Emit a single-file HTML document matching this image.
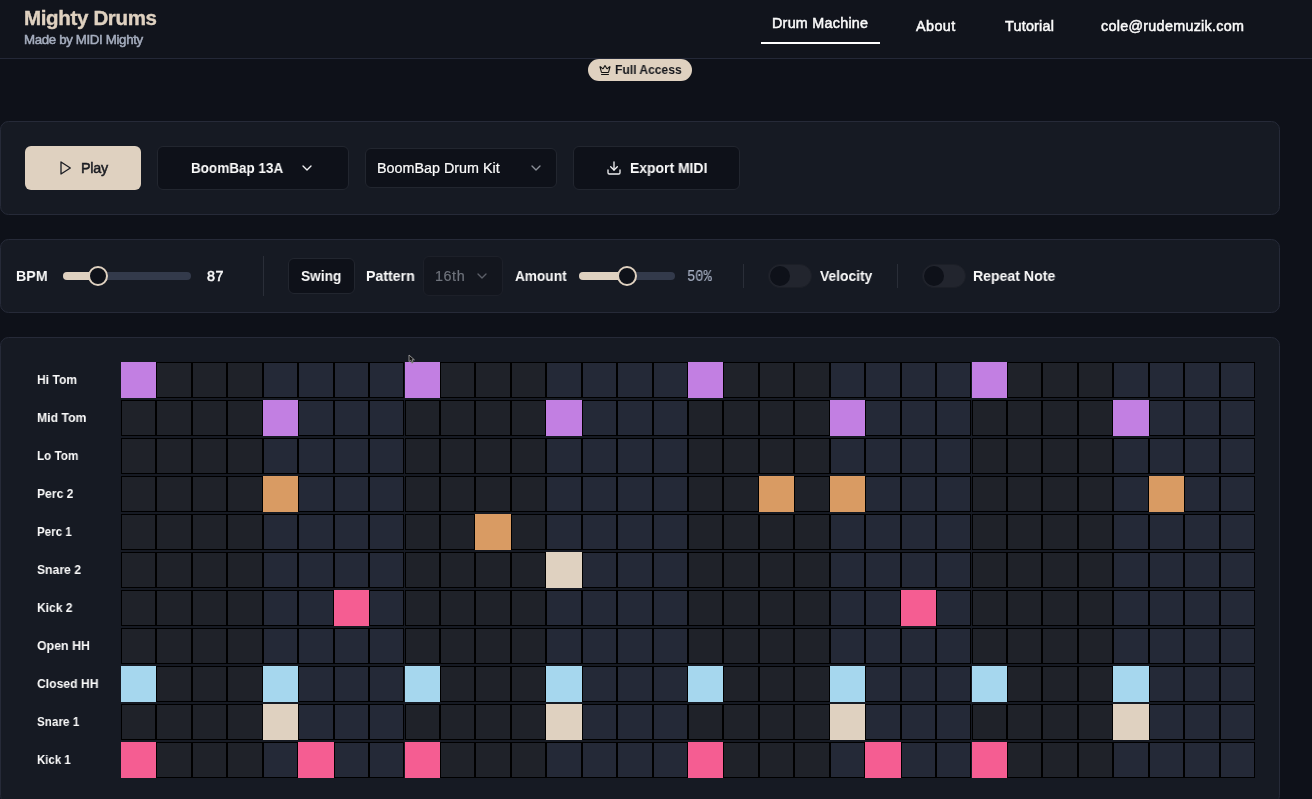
<!DOCTYPE html>
<html><head><meta charset="utf-8">
<style>
*{box-sizing:border-box;margin:0;padding:0}
html,body{width:1312px;height:799px;overflow:hidden;background:#0e1119;font-family:"Liberation Sans",sans-serif;color:#fafafa}
.abs{position:absolute}
#hdr{position:absolute;left:0;top:0;width:1312px;height:59px;background:#11141c;border-bottom:1px solid #242837}
.t{position:absolute;white-space:nowrap;line-height:1;will-change:transform}
.t.b{font-weight:700;-webkit-text-stroke:0.4px currentColor}
.t.sb{font-weight:700;transform-origin:0 0}
.t.m{font-weight:400;-webkit-text-stroke:0.5px currentColor}
.t.r{font-weight:400;-webkit-text-stroke:0.2px currentColor}
.t.mono{font-family:"Liberation Mono",monospace;-webkit-text-stroke:0.15px currentColor;transform:scaleX(0.86);transform-origin:0 0}
.mk{display:inline-block;width:0;height:0;vertical-align:baseline}
.card{position:absolute;left:0;width:1280px;background:#161a23;border:1px solid #262a38;border-radius:8.5px}
.box{position:absolute;background:#0e1119;border:1px solid #22262f;border-radius:6px}
.c{position:absolute;width:35.4375px;height:36px;border:1px solid #000}
.c.a{background:#1f2229}
.c.b{background:#242937}
.track{position:absolute;height:8px;border-radius:4px;background:#333a4b;overflow:hidden}
.fill{position:absolute;left:0;top:0;height:8px;background:#dfd1c0}
.thumb{position:absolute;width:20px;height:20px;border-radius:50%;background:#0e1119;border:2px solid #dfd1c0}
.div{position:absolute;width:1px;background:#2a2e38}
.tog{position:absolute;width:44px;height:24px;border-radius:12px;background:#22252e;border:1px solid #1c1f27}
.tog i{position:absolute;left:1px;top:1px;width:20px;height:20px;border-radius:50%;background:#0e1119}
</style></head><body>
<div id="hdr"></div>
<div id="title" class="t b" style="left:23.99px;top:8.01px;font-size:20.5px;color:#dfd1c0;letter-spacing:-0.336px;">Mighty Drums</div>
<div id="sub" class="t m" style="left:24.24px;top:33.01px;font-size:13.3px;color:#a6aebf;letter-spacing:-0.359px;">Made by MIDI Mighty</div>
<div id="nav1" class="t m" style="left:771.77px;top:16.00px;font-size:14.35px;color:#fafafa;letter-spacing:0.254px;">Drum Machine</div>
<div class="abs" style="left:761px;top:42px;width:119px;height:2px;background:#fff"></div>
<div id="nav2" class="t m" style="left:915.54px;top:19.00px;font-size:14.35px;color:#fafafa;letter-spacing:0.444px;">About</div>
<div id="nav3" class="t m" style="left:1005.25px;top:19.00px;font-size:14.35px;color:#fafafa;letter-spacing:0.233px;">Tutorial</div>
<div id="nav4" class="t m" style="left:1101.42px;top:19.00px;font-size:14.35px;color:#fafafa;letter-spacing:0.285px;">cole@rudemuzik.com</div>

<div class="abs" style="left:588px;top:59px;width:104px;height:22px;border-radius:11px;background:#dfd1c0"></div>
<svg class="abs" style="left:599px;top:64px" width="12" height="12" viewBox="0 0 24 24" fill="none" stroke="#111" stroke-width="2.1" stroke-linecap="round" stroke-linejoin="round"><path d="M11.562 3.266a.5.5 0 0 1 .876 0L15.39 8.87a1 1 0 0 0 1.516.294L21.183 5.5a.5.5 0 0 1 .798.519l-2.834 10.246a1 1 0 0 1-.956.734H5.81a1 1 0 0 1-.957-.734L2.02 6.02a.5.5 0 0 1 .798-.519l4.276 3.664a1 1 0 0 0 1.516-.294z"/><path d="M5 21h14"/></svg>
<div id="fa" class="t sb" style="left:615.30px;top:64.00px;font-size:12.3px;color:#15171c;transform:scaleX(0.9824);">Full Access</div>

<!-- card 1 -->
<div class="card" style="top:121px;height:94px"></div>
<div class="abs" style="left:25px;top:146px;width:116px;height:44px;border-radius:6px;background:#dfd1c0"></div>
<svg class="abs" style="left:56.5px;top:160px" width="16" height="16" viewBox="0 0 24 24" fill="none" stroke="#1b1d23" stroke-width="2" stroke-linecap="round" stroke-linejoin="round"><path d="M6 3l14 9-14 9V3z"/></svg>
<div id="play" class="t m" style="left:80.52px;top:161.00px;font-size:14.35px;color:#1b1d23;letter-spacing:-0.253px;">Play</div>

<div class="box" style="left:157px;top:146px;width:192px;height:44px"></div>
<div id="bb" class="t sb" style="left:191.41px;top:161.00px;font-size:14.35px;color:#fafafa;transform:scaleX(0.9398);">BoomBap 13A</div>
<svg class="abs" style="left:299px;top:160px" width="16" height="16" viewBox="0 0 24 24" fill="none" stroke="#f0f0f2" stroke-width="2" stroke-linecap="round" stroke-linejoin="round"><path d="M6 9l6 6 6-6"/></svg>

<div class="box" style="left:365px;top:148px;width:192px;height:40px"></div>
<div id="kit" class="t r" style="left:377.38px;top:161.00px;font-size:14.35px;color:#fafafa;letter-spacing:-0.009px;">BoomBap Drum Kit</div>
<svg class="abs" style="left:528px;top:160px" width="16" height="16" viewBox="0 0 24 24" fill="none" stroke="#8b8f98" stroke-width="2" stroke-linecap="round" stroke-linejoin="round"><path d="M6 9l6 6 6-6"/></svg>

<div class="box" style="left:573px;top:146px;width:167px;height:44px"></div>
<svg class="abs" style="left:606px;top:160px" width="16" height="16" viewBox="0 0 24 24" fill="none" stroke="#f0f0f2" stroke-width="2" stroke-linecap="round" stroke-linejoin="round"><path d="M21 15v4a2 2 0 0 1-2 2H5a2 2 0 0 1-2-2v-4"/><path d="M7 10l5 5 5-5"/><path d="M12 15V3"/></svg>
<div id="exp" class="t sb" style="left:629.61px;top:161.00px;font-size:14.35px;color:#fafafa;transform:scaleX(0.9712);">Export MIDI</div>

<!-- card 2 -->
<div class="card" style="top:239px;height:74px"></div>
<div id="bpm" class="t sb" style="left:15.54px;top:269.00px;font-size:14.35px;color:#fafafa;transform:scaleX(0.9913);">BPM</div>
<div class="track" style="left:63px;top:272px;width:128px"><div class="fill" style="width:35px"></div></div>
<div class="thumb" style="left:88px;top:266px"></div>
<div id="n87" class="t m" style="left:207.34px;top:269.00px;font-size:14.35px;color:#fafafa;letter-spacing:0.398px;">87</div>
<div class="div" style="left:263px;top:256px;height:40px"></div>

<div class="box" style="left:288px;top:258px;width:67px;height:36px"></div>
<div id="swing" class="t sb" style="left:301.00px;top:269.00px;font-size:14.35px;color:#fafafa;transform:scaleX(0.9534);">Swing</div>
<div id="pat" class="t sb" style="left:366.24px;top:269.00px;font-size:14.35px;color:#fafafa;transform:scaleX(0.9863);">Pattern</div>
<div class="box" style="left:423px;top:256px;width:80px;height:40px;background:#13161e;border-color:#1d2029"></div>
<div id="p16" class="t r" style="left:435.15px;top:269.00px;font-size:14.35px;color:#6f737c;letter-spacing:0.565px;">16th</div>
<svg class="abs" style="left:474px;top:268px" width="16" height="16" viewBox="0 0 24 24" fill="none" stroke="#5b5f68" stroke-width="2" stroke-linecap="round" stroke-linejoin="round"><path d="M6 9l6 6 6-6"/></svg>

<div id="amt" class="t sb" style="left:515.44px;top:269.00px;font-size:14.35px;color:#fafafa;transform:scaleX(0.9516);">Amount</div>
<div class="track" style="left:579px;top:272px;width:96px"><div class="fill" style="width:48px"></div></div>
<div class="thumb" style="left:617px;top:266px"></div>
<div id="pct" class="t mono" style="left:687.14px;top:269.01px;font-size:16px;color:#a3acbf;">50%</div>
<div class="div" style="left:743px;top:264px;height:24px"></div>

<div class="tog" style="left:768px;top:264px"><i></i></div>
<div id="vel" class="t sb" style="left:820.18px;top:269.00px;font-size:14.35px;color:#fafafa;transform:scaleX(0.9642);">Velocity</div>
<div class="div" style="left:897px;top:264px;height:24px"></div>
<div class="tog" style="left:922px;top:264px"><i></i></div>
<div id="rep" class="t sb" style="left:973.24px;top:269.00px;font-size:14.35px;color:#fafafa;transform:scaleX(0.9823);">Repeat Note</div>

<!-- card 3 -->
<div class="card" style="top:337px;height:467px"></div>
<div id="lbl0" class="t sb" style="left:36.83px;top:373.00px;font-size:13.3px;color:#fafafa;transform:scaleX(0.9089);">Hi Tom</div><div id="lbl1" class="t sb" style="left:36.83px;top:411.00px;font-size:13.3px;color:#fafafa;transform:scaleX(0.9221);">Mid Tom</div><div id="lbl2" class="t sb" style="left:36.93px;top:449.00px;font-size:13.3px;color:#fafafa;transform:scaleX(0.8792);">Lo Tom</div><div id="lbl3" class="t sb" style="left:36.83px;top:487.00px;font-size:13.3px;color:#fafafa;transform:scaleX(0.9124);">Perc 2</div><div id="lbl4" class="t sb" style="left:36.93px;top:525.01px;font-size:13.3px;color:#fafafa;transform:scaleX(0.8710);">Perc 1</div><div id="lbl5" class="t sb" style="left:37.43px;top:563.01px;font-size:13.3px;color:#fafafa;transform:scaleX(0.9157);">Snare 2</div><div id="lbl6" class="t sb" style="left:36.83px;top:601.01px;font-size:13.3px;color:#fafafa;transform:scaleX(0.9061);">Kick 2</div><div id="lbl7" class="t sb" style="left:37.17px;top:639.01px;font-size:13.3px;color:#fafafa;transform:scaleX(0.9309);">Open HH</div><div id="lbl8" class="t sb" style="left:36.55px;top:677.01px;font-size:13.3px;color:#fafafa;transform:scaleX(0.9143);">Closed HH</div><div id="lbl9" class="t sb" style="left:37.03px;top:715.01px;font-size:13.3px;color:#fafafa;transform:scaleX(0.8787);">Snare 1</div><div id="lbl10" class="t sb" style="left:36.93px;top:753.01px;font-size:13.3px;color:#fafafa;transform:scaleX(0.8608);">Kick 1</div>
<div class="c" style="left:121.00px;top:362px;background:#c27fe2;border-color:#c27fe2"></div><div class="c a" style="left:156.44px;top:362px"></div><div class="c a" style="left:191.88px;top:362px"></div><div class="c a" style="left:227.31px;top:362px"></div><div class="c b" style="left:262.75px;top:362px"></div><div class="c b" style="left:298.19px;top:362px"></div><div class="c b" style="left:333.62px;top:362px"></div><div class="c b" style="left:369.06px;top:362px"></div><div class="c" style="left:404.50px;top:362px;background:#c27fe2;border-color:#c27fe2"></div><div class="c a" style="left:439.94px;top:362px"></div><div class="c a" style="left:475.38px;top:362px"></div><div class="c a" style="left:510.81px;top:362px"></div><div class="c b" style="left:546.25px;top:362px"></div><div class="c b" style="left:581.69px;top:362px"></div><div class="c b" style="left:617.12px;top:362px"></div><div class="c b" style="left:652.56px;top:362px"></div><div class="c" style="left:688.00px;top:362px;background:#c27fe2;border-color:#c27fe2"></div><div class="c a" style="left:723.44px;top:362px"></div><div class="c a" style="left:758.88px;top:362px"></div><div class="c a" style="left:794.31px;top:362px"></div><div class="c b" style="left:829.75px;top:362px"></div><div class="c b" style="left:865.19px;top:362px"></div><div class="c b" style="left:900.62px;top:362px"></div><div class="c b" style="left:936.06px;top:362px"></div><div class="c" style="left:971.50px;top:362px;background:#c27fe2;border-color:#c27fe2"></div><div class="c a" style="left:1006.94px;top:362px"></div><div class="c a" style="left:1042.38px;top:362px"></div><div class="c a" style="left:1077.81px;top:362px"></div><div class="c b" style="left:1113.25px;top:362px"></div><div class="c b" style="left:1148.69px;top:362px"></div><div class="c b" style="left:1184.12px;top:362px"></div><div class="c b" style="left:1219.56px;top:362px"></div><div class="c a" style="left:121.00px;top:400px"></div><div class="c a" style="left:156.44px;top:400px"></div><div class="c a" style="left:191.88px;top:400px"></div><div class="c a" style="left:227.31px;top:400px"></div><div class="c" style="left:262.75px;top:400px;background:#c27fe2;border-color:#c27fe2"></div><div class="c b" style="left:298.19px;top:400px"></div><div class="c b" style="left:333.62px;top:400px"></div><div class="c b" style="left:369.06px;top:400px"></div><div class="c a" style="left:404.50px;top:400px"></div><div class="c a" style="left:439.94px;top:400px"></div><div class="c a" style="left:475.38px;top:400px"></div><div class="c a" style="left:510.81px;top:400px"></div><div class="c" style="left:546.25px;top:400px;background:#c27fe2;border-color:#c27fe2"></div><div class="c b" style="left:581.69px;top:400px"></div><div class="c b" style="left:617.12px;top:400px"></div><div class="c b" style="left:652.56px;top:400px"></div><div class="c a" style="left:688.00px;top:400px"></div><div class="c a" style="left:723.44px;top:400px"></div><div class="c a" style="left:758.88px;top:400px"></div><div class="c a" style="left:794.31px;top:400px"></div><div class="c" style="left:829.75px;top:400px;background:#c27fe2;border-color:#c27fe2"></div><div class="c b" style="left:865.19px;top:400px"></div><div class="c b" style="left:900.62px;top:400px"></div><div class="c b" style="left:936.06px;top:400px"></div><div class="c a" style="left:971.50px;top:400px"></div><div class="c a" style="left:1006.94px;top:400px"></div><div class="c a" style="left:1042.38px;top:400px"></div><div class="c a" style="left:1077.81px;top:400px"></div><div class="c" style="left:1113.25px;top:400px;background:#c27fe2;border-color:#c27fe2"></div><div class="c b" style="left:1148.69px;top:400px"></div><div class="c b" style="left:1184.12px;top:400px"></div><div class="c b" style="left:1219.56px;top:400px"></div><div class="c a" style="left:121.00px;top:438px"></div><div class="c a" style="left:156.44px;top:438px"></div><div class="c a" style="left:191.88px;top:438px"></div><div class="c a" style="left:227.31px;top:438px"></div><div class="c b" style="left:262.75px;top:438px"></div><div class="c b" style="left:298.19px;top:438px"></div><div class="c b" style="left:333.62px;top:438px"></div><div class="c b" style="left:369.06px;top:438px"></div><div class="c a" style="left:404.50px;top:438px"></div><div class="c a" style="left:439.94px;top:438px"></div><div class="c a" style="left:475.38px;top:438px"></div><div class="c a" style="left:510.81px;top:438px"></div><div class="c b" style="left:546.25px;top:438px"></div><div class="c b" style="left:581.69px;top:438px"></div><div class="c b" style="left:617.12px;top:438px"></div><div class="c b" style="left:652.56px;top:438px"></div><div class="c a" style="left:688.00px;top:438px"></div><div class="c a" style="left:723.44px;top:438px"></div><div class="c a" style="left:758.88px;top:438px"></div><div class="c a" style="left:794.31px;top:438px"></div><div class="c b" style="left:829.75px;top:438px"></div><div class="c b" style="left:865.19px;top:438px"></div><div class="c b" style="left:900.62px;top:438px"></div><div class="c b" style="left:936.06px;top:438px"></div><div class="c a" style="left:971.50px;top:438px"></div><div class="c a" style="left:1006.94px;top:438px"></div><div class="c a" style="left:1042.38px;top:438px"></div><div class="c a" style="left:1077.81px;top:438px"></div><div class="c b" style="left:1113.25px;top:438px"></div><div class="c b" style="left:1148.69px;top:438px"></div><div class="c b" style="left:1184.12px;top:438px"></div><div class="c b" style="left:1219.56px;top:438px"></div><div class="c a" style="left:121.00px;top:476px"></div><div class="c a" style="left:156.44px;top:476px"></div><div class="c a" style="left:191.88px;top:476px"></div><div class="c a" style="left:227.31px;top:476px"></div><div class="c" style="left:262.75px;top:476px;background:#d99b63;border-color:#d99b63"></div><div class="c b" style="left:298.19px;top:476px"></div><div class="c b" style="left:333.62px;top:476px"></div><div class="c b" style="left:369.06px;top:476px"></div><div class="c a" style="left:404.50px;top:476px"></div><div class="c a" style="left:439.94px;top:476px"></div><div class="c a" style="left:475.38px;top:476px"></div><div class="c a" style="left:510.81px;top:476px"></div><div class="c b" style="left:546.25px;top:476px"></div><div class="c b" style="left:581.69px;top:476px"></div><div class="c b" style="left:617.12px;top:476px"></div><div class="c b" style="left:652.56px;top:476px"></div><div class="c a" style="left:688.00px;top:476px"></div><div class="c a" style="left:723.44px;top:476px"></div><div class="c" style="left:758.88px;top:476px;background:#d99b63;border-color:#d99b63"></div><div class="c a" style="left:794.31px;top:476px"></div><div class="c" style="left:829.75px;top:476px;background:#d99b63;border-color:#d99b63"></div><div class="c b" style="left:865.19px;top:476px"></div><div class="c b" style="left:900.62px;top:476px"></div><div class="c b" style="left:936.06px;top:476px"></div><div class="c a" style="left:971.50px;top:476px"></div><div class="c a" style="left:1006.94px;top:476px"></div><div class="c a" style="left:1042.38px;top:476px"></div><div class="c a" style="left:1077.81px;top:476px"></div><div class="c b" style="left:1113.25px;top:476px"></div><div class="c" style="left:1148.69px;top:476px;background:#d99b63;border-color:#d99b63"></div><div class="c b" style="left:1184.12px;top:476px"></div><div class="c b" style="left:1219.56px;top:476px"></div><div class="c a" style="left:121.00px;top:514px"></div><div class="c a" style="left:156.44px;top:514px"></div><div class="c a" style="left:191.88px;top:514px"></div><div class="c a" style="left:227.31px;top:514px"></div><div class="c b" style="left:262.75px;top:514px"></div><div class="c b" style="left:298.19px;top:514px"></div><div class="c b" style="left:333.62px;top:514px"></div><div class="c b" style="left:369.06px;top:514px"></div><div class="c a" style="left:404.50px;top:514px"></div><div class="c a" style="left:439.94px;top:514px"></div><div class="c" style="left:475.38px;top:514px;background:#d99b63;border-color:#d99b63"></div><div class="c a" style="left:510.81px;top:514px"></div><div class="c b" style="left:546.25px;top:514px"></div><div class="c b" style="left:581.69px;top:514px"></div><div class="c b" style="left:617.12px;top:514px"></div><div class="c b" style="left:652.56px;top:514px"></div><div class="c a" style="left:688.00px;top:514px"></div><div class="c a" style="left:723.44px;top:514px"></div><div class="c a" style="left:758.88px;top:514px"></div><div class="c a" style="left:794.31px;top:514px"></div><div class="c b" style="left:829.75px;top:514px"></div><div class="c b" style="left:865.19px;top:514px"></div><div class="c b" style="left:900.62px;top:514px"></div><div class="c b" style="left:936.06px;top:514px"></div><div class="c a" style="left:971.50px;top:514px"></div><div class="c a" style="left:1006.94px;top:514px"></div><div class="c a" style="left:1042.38px;top:514px"></div><div class="c a" style="left:1077.81px;top:514px"></div><div class="c b" style="left:1113.25px;top:514px"></div><div class="c b" style="left:1148.69px;top:514px"></div><div class="c b" style="left:1184.12px;top:514px"></div><div class="c b" style="left:1219.56px;top:514px"></div><div class="c a" style="left:121.00px;top:552px"></div><div class="c a" style="left:156.44px;top:552px"></div><div class="c a" style="left:191.88px;top:552px"></div><div class="c a" style="left:227.31px;top:552px"></div><div class="c b" style="left:262.75px;top:552px"></div><div class="c b" style="left:298.19px;top:552px"></div><div class="c b" style="left:333.62px;top:552px"></div><div class="c b" style="left:369.06px;top:552px"></div><div class="c a" style="left:404.50px;top:552px"></div><div class="c a" style="left:439.94px;top:552px"></div><div class="c a" style="left:475.38px;top:552px"></div><div class="c a" style="left:510.81px;top:552px"></div><div class="c" style="left:546.25px;top:552px;background:#dfd1c0;border-color:#dfd1c0"></div><div class="c b" style="left:581.69px;top:552px"></div><div class="c b" style="left:617.12px;top:552px"></div><div class="c b" style="left:652.56px;top:552px"></div><div class="c a" style="left:688.00px;top:552px"></div><div class="c a" style="left:723.44px;top:552px"></div><div class="c a" style="left:758.88px;top:552px"></div><div class="c a" style="left:794.31px;top:552px"></div><div class="c b" style="left:829.75px;top:552px"></div><div class="c b" style="left:865.19px;top:552px"></div><div class="c b" style="left:900.62px;top:552px"></div><div class="c b" style="left:936.06px;top:552px"></div><div class="c a" style="left:971.50px;top:552px"></div><div class="c a" style="left:1006.94px;top:552px"></div><div class="c a" style="left:1042.38px;top:552px"></div><div class="c a" style="left:1077.81px;top:552px"></div><div class="c b" style="left:1113.25px;top:552px"></div><div class="c b" style="left:1148.69px;top:552px"></div><div class="c b" style="left:1184.12px;top:552px"></div><div class="c b" style="left:1219.56px;top:552px"></div><div class="c a" style="left:121.00px;top:590px"></div><div class="c a" style="left:156.44px;top:590px"></div><div class="c a" style="left:191.88px;top:590px"></div><div class="c a" style="left:227.31px;top:590px"></div><div class="c b" style="left:262.75px;top:590px"></div><div class="c b" style="left:298.19px;top:590px"></div><div class="c" style="left:333.62px;top:590px;background:#f55d92;border-color:#f55d92"></div><div class="c b" style="left:369.06px;top:590px"></div><div class="c a" style="left:404.50px;top:590px"></div><div class="c a" style="left:439.94px;top:590px"></div><div class="c a" style="left:475.38px;top:590px"></div><div class="c a" style="left:510.81px;top:590px"></div><div class="c b" style="left:546.25px;top:590px"></div><div class="c b" style="left:581.69px;top:590px"></div><div class="c b" style="left:617.12px;top:590px"></div><div class="c b" style="left:652.56px;top:590px"></div><div class="c a" style="left:688.00px;top:590px"></div><div class="c a" style="left:723.44px;top:590px"></div><div class="c a" style="left:758.88px;top:590px"></div><div class="c a" style="left:794.31px;top:590px"></div><div class="c b" style="left:829.75px;top:590px"></div><div class="c b" style="left:865.19px;top:590px"></div><div class="c" style="left:900.62px;top:590px;background:#f55d92;border-color:#f55d92"></div><div class="c b" style="left:936.06px;top:590px"></div><div class="c a" style="left:971.50px;top:590px"></div><div class="c a" style="left:1006.94px;top:590px"></div><div class="c a" style="left:1042.38px;top:590px"></div><div class="c a" style="left:1077.81px;top:590px"></div><div class="c b" style="left:1113.25px;top:590px"></div><div class="c b" style="left:1148.69px;top:590px"></div><div class="c b" style="left:1184.12px;top:590px"></div><div class="c b" style="left:1219.56px;top:590px"></div><div class="c a" style="left:121.00px;top:628px"></div><div class="c a" style="left:156.44px;top:628px"></div><div class="c a" style="left:191.88px;top:628px"></div><div class="c a" style="left:227.31px;top:628px"></div><div class="c b" style="left:262.75px;top:628px"></div><div class="c b" style="left:298.19px;top:628px"></div><div class="c b" style="left:333.62px;top:628px"></div><div class="c b" style="left:369.06px;top:628px"></div><div class="c a" style="left:404.50px;top:628px"></div><div class="c a" style="left:439.94px;top:628px"></div><div class="c a" style="left:475.38px;top:628px"></div><div class="c a" style="left:510.81px;top:628px"></div><div class="c b" style="left:546.25px;top:628px"></div><div class="c b" style="left:581.69px;top:628px"></div><div class="c b" style="left:617.12px;top:628px"></div><div class="c b" style="left:652.56px;top:628px"></div><div class="c a" style="left:688.00px;top:628px"></div><div class="c a" style="left:723.44px;top:628px"></div><div class="c a" style="left:758.88px;top:628px"></div><div class="c a" style="left:794.31px;top:628px"></div><div class="c b" style="left:829.75px;top:628px"></div><div class="c b" style="left:865.19px;top:628px"></div><div class="c b" style="left:900.62px;top:628px"></div><div class="c b" style="left:936.06px;top:628px"></div><div class="c a" style="left:971.50px;top:628px"></div><div class="c a" style="left:1006.94px;top:628px"></div><div class="c a" style="left:1042.38px;top:628px"></div><div class="c a" style="left:1077.81px;top:628px"></div><div class="c b" style="left:1113.25px;top:628px"></div><div class="c b" style="left:1148.69px;top:628px"></div><div class="c b" style="left:1184.12px;top:628px"></div><div class="c b" style="left:1219.56px;top:628px"></div><div class="c" style="left:121.00px;top:666px;background:#a6d7ee;border-color:#a6d7ee"></div><div class="c a" style="left:156.44px;top:666px"></div><div class="c a" style="left:191.88px;top:666px"></div><div class="c a" style="left:227.31px;top:666px"></div><div class="c" style="left:262.75px;top:666px;background:#a6d7ee;border-color:#a6d7ee"></div><div class="c b" style="left:298.19px;top:666px"></div><div class="c b" style="left:333.62px;top:666px"></div><div class="c b" style="left:369.06px;top:666px"></div><div class="c" style="left:404.50px;top:666px;background:#a6d7ee;border-color:#a6d7ee"></div><div class="c a" style="left:439.94px;top:666px"></div><div class="c a" style="left:475.38px;top:666px"></div><div class="c a" style="left:510.81px;top:666px"></div><div class="c" style="left:546.25px;top:666px;background:#a6d7ee;border-color:#a6d7ee"></div><div class="c b" style="left:581.69px;top:666px"></div><div class="c b" style="left:617.12px;top:666px"></div><div class="c b" style="left:652.56px;top:666px"></div><div class="c" style="left:688.00px;top:666px;background:#a6d7ee;border-color:#a6d7ee"></div><div class="c a" style="left:723.44px;top:666px"></div><div class="c a" style="left:758.88px;top:666px"></div><div class="c a" style="left:794.31px;top:666px"></div><div class="c" style="left:829.75px;top:666px;background:#a6d7ee;border-color:#a6d7ee"></div><div class="c b" style="left:865.19px;top:666px"></div><div class="c b" style="left:900.62px;top:666px"></div><div class="c b" style="left:936.06px;top:666px"></div><div class="c" style="left:971.50px;top:666px;background:#a6d7ee;border-color:#a6d7ee"></div><div class="c a" style="left:1006.94px;top:666px"></div><div class="c a" style="left:1042.38px;top:666px"></div><div class="c a" style="left:1077.81px;top:666px"></div><div class="c" style="left:1113.25px;top:666px;background:#a6d7ee;border-color:#a6d7ee"></div><div class="c b" style="left:1148.69px;top:666px"></div><div class="c b" style="left:1184.12px;top:666px"></div><div class="c b" style="left:1219.56px;top:666px"></div><div class="c a" style="left:121.00px;top:704px"></div><div class="c a" style="left:156.44px;top:704px"></div><div class="c a" style="left:191.88px;top:704px"></div><div class="c a" style="left:227.31px;top:704px"></div><div class="c" style="left:262.75px;top:704px;background:#dfd1c0;border-color:#dfd1c0"></div><div class="c b" style="left:298.19px;top:704px"></div><div class="c b" style="left:333.62px;top:704px"></div><div class="c b" style="left:369.06px;top:704px"></div><div class="c a" style="left:404.50px;top:704px"></div><div class="c a" style="left:439.94px;top:704px"></div><div class="c a" style="left:475.38px;top:704px"></div><div class="c a" style="left:510.81px;top:704px"></div><div class="c" style="left:546.25px;top:704px;background:#dfd1c0;border-color:#dfd1c0"></div><div class="c b" style="left:581.69px;top:704px"></div><div class="c b" style="left:617.12px;top:704px"></div><div class="c b" style="left:652.56px;top:704px"></div><div class="c a" style="left:688.00px;top:704px"></div><div class="c a" style="left:723.44px;top:704px"></div><div class="c a" style="left:758.88px;top:704px"></div><div class="c a" style="left:794.31px;top:704px"></div><div class="c" style="left:829.75px;top:704px;background:#dfd1c0;border-color:#dfd1c0"></div><div class="c b" style="left:865.19px;top:704px"></div><div class="c b" style="left:900.62px;top:704px"></div><div class="c b" style="left:936.06px;top:704px"></div><div class="c a" style="left:971.50px;top:704px"></div><div class="c a" style="left:1006.94px;top:704px"></div><div class="c a" style="left:1042.38px;top:704px"></div><div class="c a" style="left:1077.81px;top:704px"></div><div class="c" style="left:1113.25px;top:704px;background:#dfd1c0;border-color:#dfd1c0"></div><div class="c b" style="left:1148.69px;top:704px"></div><div class="c b" style="left:1184.12px;top:704px"></div><div class="c b" style="left:1219.56px;top:704px"></div><div class="c" style="left:121.00px;top:742px;background:#f55d92;border-color:#f55d92"></div><div class="c a" style="left:156.44px;top:742px"></div><div class="c a" style="left:191.88px;top:742px"></div><div class="c a" style="left:227.31px;top:742px"></div><div class="c b" style="left:262.75px;top:742px"></div><div class="c" style="left:298.19px;top:742px;background:#f55d92;border-color:#f55d92"></div><div class="c b" style="left:333.62px;top:742px"></div><div class="c b" style="left:369.06px;top:742px"></div><div class="c" style="left:404.50px;top:742px;background:#f55d92;border-color:#f55d92"></div><div class="c a" style="left:439.94px;top:742px"></div><div class="c a" style="left:475.38px;top:742px"></div><div class="c a" style="left:510.81px;top:742px"></div><div class="c b" style="left:546.25px;top:742px"></div><div class="c b" style="left:581.69px;top:742px"></div><div class="c b" style="left:617.12px;top:742px"></div><div class="c b" style="left:652.56px;top:742px"></div><div class="c" style="left:688.00px;top:742px;background:#f55d92;border-color:#f55d92"></div><div class="c a" style="left:723.44px;top:742px"></div><div class="c a" style="left:758.88px;top:742px"></div><div class="c a" style="left:794.31px;top:742px"></div><div class="c b" style="left:829.75px;top:742px"></div><div class="c" style="left:865.19px;top:742px;background:#f55d92;border-color:#f55d92"></div><div class="c b" style="left:900.62px;top:742px"></div><div class="c b" style="left:936.06px;top:742px"></div><div class="c" style="left:971.50px;top:742px;background:#f55d92;border-color:#f55d92"></div><div class="c a" style="left:1006.94px;top:742px"></div><div class="c a" style="left:1042.38px;top:742px"></div><div class="c a" style="left:1077.81px;top:742px"></div><div class="c b" style="left:1113.25px;top:742px"></div><div class="c b" style="left:1148.69px;top:742px"></div><div class="c b" style="left:1184.12px;top:742px"></div><div class="c b" style="left:1219.56px;top:742px"></div>

<svg class="abs" style="left:407.5px;top:354px" width="9" height="11" viewBox="0 0 9 11"><path d="M1 1 L1 7.6 L2.6 6.3 L3.9 9.2 L5.2 8.6 L4 5.8 L6.4 5.8 Z" fill="#111" stroke="#9a9a9a" stroke-width="0.9" stroke-linejoin="round"/></svg>
</body></html>
